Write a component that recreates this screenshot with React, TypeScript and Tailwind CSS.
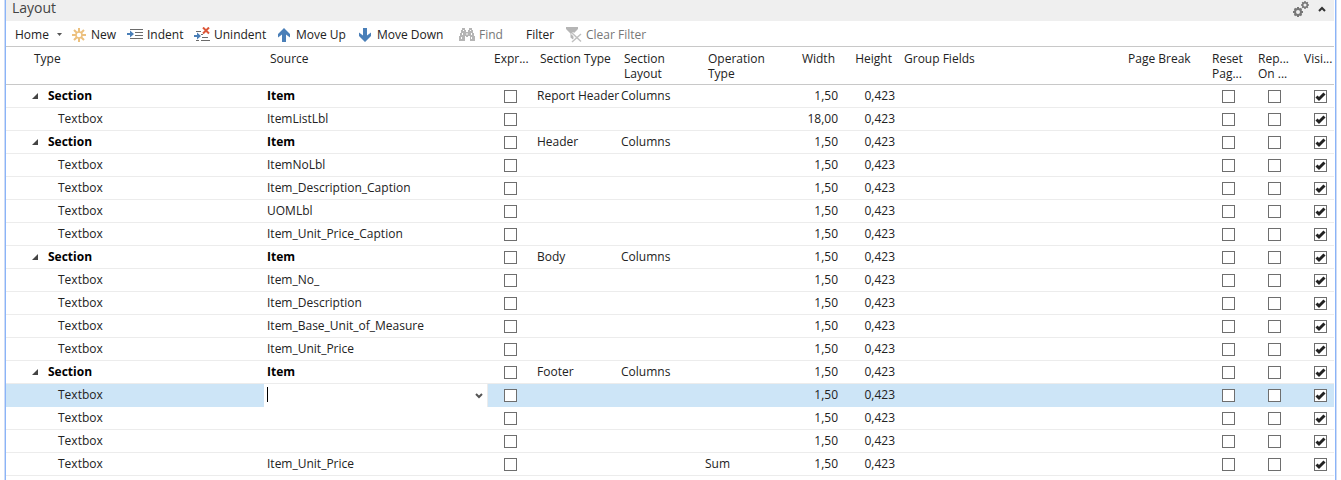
import type { ReactNode } from "react"

type Row = {
  type: "Section" | "Textbox";
  source: string;
  sectionType?: string;
  sectionLayout?: string;
  operation?: string;
  width?: string;
  selected?: boolean;
};

const rows: Row[] = [
  { type: "Section", source: "Item", sectionType: "Report Header", sectionLayout: "Columns" },
  { type: "Textbox", source: "ItemListLbl", width: "18,00" },
  { type: "Section", source: "Item", sectionType: "Header", sectionLayout: "Columns" },
  { type: "Textbox", source: "ItemNoLbl" },
  { type: "Textbox", source: "Item_Description_Caption" },
  { type: "Textbox", source: "UOMLbl" },
  { type: "Textbox", source: "Item_Unit_Price_Caption" },
  { type: "Section", source: "Item", sectionType: "Body", sectionLayout: "Columns" },
  { type: "Textbox", source: "Item_No_" },
  { type: "Textbox", source: "Item_Description" },
  { type: "Textbox", source: "Item_Base_Unit_of_Measure" },
  { type: "Textbox", source: "Item_Unit_Price" },
  { type: "Section", source: "Item", sectionType: "Footer", sectionLayout: "Columns" },
  { type: "Textbox", source: "", selected: true },
  { type: "Textbox", source: "" },
  { type: "Textbox", source: "" },
  { type: "Textbox", source: "Item_Unit_Price", operation: "Sum" }
];

const NewIcon = () => (
  <svg className="w-4 h-4 shrink-0" viewBox="0 0 16 16" fill="none" stroke="#ecc07e" strokeWidth="2">
    <circle cx="8" cy="8" r="3" strokeWidth="1.5" />
    <path d="M8 1v4M8 11v4M1 8h4M11 8h4M3 3l2.800 2.800M10.200 10.200L13 13M13 3l-2.800 2.800M5.800 10.200L3 13" />
  </svg>
)

const IndentIcon = () => (
  <svg className="w-4 h-4 shrink-0" viewBox="0 0 16 16">
    <path d="M3 2.500h13M8 5.500h8M8 8.500h8M3 11.500h13" stroke="#6b6b6b" fill="none" />
    <path d="M0 6h3V3.500l4 3.500-4 3.500V8H0z" fill="#4a7fb8" />
  </svg>
)

const UnindentIcon = () => (
  <svg className="w-4 h-4 shrink-0" viewBox="0 0 16 16">
    <path d="M2 4.500h5M7 7.500h2M8 10.500h6M2 13.500h3M7 13.500h9" stroke="#6b6b6b" fill="none" />
    <path d="M0 8h3V5.500L7 9l-4 3.500V10H0z" fill="#4a7fb8" />
    <path d="M9 0.500l6 6M15 0.500l-6 6" stroke="#dc5638" strokeWidth="2" fill="none" />
  </svg>
)

const ArrowIcon = ({ down }: { down?: boolean }) => (
  <svg className={`w-4 h-4 shrink-0 ${down ? "rotate-180" : ""}`} viewBox="0 0 16 16" fill="#4a7fb8">
    <path d="M8 1l6 6v3.500L10 7.500V15H6V7.500l-4 3V7z" />
  </svg>
)

const FindIcon = () => (
  <svg className="w-4 h-4 shrink-0" viewBox="0 0 16 16" fill="#b5b5b5">
    <path d="M3 1h3v2h1v2h2V3h1V1h3v2h1v3h1v3h1v5h-5V9H9v1H7V9H6v5H0V9h1V6h1V3h1z" />
    <path d="M4 3h1v1H4zM11 3h1v1h-1zM3 6h1v2H3zM12 6h1v2h-1zM2 10h1v2H2zM12 10h1v2h-1zM7.500 6h1v2h-1z" fill="#fff" />
  </svg>
)

const ClearFilterIcon = () => (
  <svg className="w-4 h-4 shrink-0" viewBox="0 0 16 16">
    <path d="M0 0h12v2L7.500 6.500V13L4.500 10.500v-4L0 2z" fill="#b5b5b5" />
    <path d="M6 6l9 8.500M15 7l-9 8" stroke="#fff" strokeWidth="3" />
    <path d="M6 6l9 8.500M15 7l-9 8" stroke="#c0c0c0" strokeWidth="1.500" />
  </svg>
)

const GearsIcon = () => (
  <svg className="w-[18px] h-[18px]" viewBox="0 0 18 18" fill="none" stroke="#777">
    <circle cx="6" cy="12" r="3" strokeWidth="2" />
    <path d="M6 7v2M6 15v2M1 12h2M9 12h2M2.500 8.500l1.500 1.500M8 14l1.500 1.500M9.500 8.500L8 10M4 14l-1.500 1.500" strokeWidth="2" />
    <circle cx="13" cy="5" r="2.300" strokeWidth="1.500" />
    <path d="M13 1v2M13 7v2M9 5h2M15 5h2M10.200 2.200l1.200 1.200M14.600 6.600l1.200 1.200M15.800 2.200l-1.200 1.200M11.400 6.600l-1.200 1.200" strokeWidth="1.500" />
  </svg>
)

const ToolButton = ({ icon, label, className = "", disabled }: { icon?: ReactNode; label: string; className?: string; disabled?: boolean }) => (
  <button disabled={disabled} className={`flex items-center gap-1 shrink-0 whitespace-nowrap disabled:text-[#777] ${className}`}>
    {icon}
    {label}
  </button>
)

const Check = ({ label, checked }: { label: string; checked?: boolean }) => (
  <span className="grid w-[13px] h-[13px]">
    <input
      type="checkbox"
      aria-label={label}
      defaultChecked={checked}
      className="peer col-start-1 row-start-1 appearance-none w-[13px] h-[13px] bg-white border border-[#6e6e6e]"
    />
    <svg className="col-start-1 row-start-1 hidden peer-checked:block pointer-events-none w-[13px] h-[13px]" viewBox="0 0 13 13" fill="none">
      <path d="M2.500 6.500L5 9L10.500 3.500" stroke="#222" strokeWidth="3" />
    </svg>
  </span>
)

const columns = [
  { label: "Type", width: "w-[258px]", head: "pl-7" },
  { label: "Source", width: "w-[224px]", head: "pl-1.5" },
  { label: "Expr...", width: "w-[46px]", head: "pl-1.5" },
  { label: "Section Type", width: "w-[84px]", head: "pl-1.5" },
  { label: "Section Layout", width: "w-[84px]", head: "pl-1.5 whitespace-normal pr-4" },
  { label: "Operation Type", width: "w-[84px]", head: "pl-1.5 whitespace-normal pr-4" },
  { label: "Width", width: "w-[55px]", head: "pr-1.5 text-right" },
  { label: "Height", width: "w-[57px]", head: "pr-1.5 text-right" },
  { label: "Group Fields", width: "", head: "pl-1.5" },
  { label: "Page Break", width: "w-[84px]", head: "pl-1.5" },
  { label: "Reset Pag...", width: "w-[46px]", head: "pl-1.5 whitespace-normal" },
  { label: "Rep... On ...", width: "w-[46px]", head: "pl-1.5 whitespace-normal" },
  { label: "Visi...", width: "w-[36px]", head: "pl-1.5" }
];

const SourceEditor = () => (
  <div className="relative flex items-center h-[23px] bg-white border-r border-[#ececec] pl-[3px] pr-1">
    <span className="absolute left-[3px] top-[3px] w-px h-[15px] bg-black" />
    <input type="text" aria-label="Source" className="min-w-0 flex-1 h-full outline-none" />
    <button aria-label="Open source list">
      <svg className="w-2 h-2" viewBox="0 0 8 8" fill="none" stroke="#555" strokeWidth="2">
        <path d="M1 2l3 3 3-3" />
      </svg>
    </button>
  </div>
)

const LayoutRow = ({ row }: { row: Row }) => {
  const section = row.type === "Section";
  const cell = `h-[23px] p-0 align-top border-b ${row.selected ? "border-[#cde5f7]" : "border-[#ececec]"}`;
  return (
    <tr className={`leading-[22px] ${row.selected ? "bg-[#cde5f7]" : ""}`}>
      <td className={cell}>
        {section ? (
          <div className="flex items-center pl-[26px] gap-[10px] font-bold text-black">
            <button aria-label="Collapse section">
              <svg className="w-1.5 h-1.5" viewBox="0 0 6 6" fill="#444">
                <path d="M6 0v6H0z" />
              </svg>
            </button>
            Section
          </div>
        ) : (
          <div className="pl-[52px]">Textbox</div>
        )}
      </td>
      {row.selected ? (
        <td className="h-[23px] p-0"><SourceEditor /></td>
      ) : (
        <td className={`${cell} ${section ? "font-bold text-black" : ""}`}>
          <div className="pl-[3px]">{row.source}</div>
        </td>
      )}
      <td className={cell}><div className="pl-4 pt-[5px]"><Check label="Expression" /></div></td>
      <td className={cell}><div className="pl-[3px]">{row.sectionType}</div></td>
      <td className={cell}><div className="pl-[3px]">{row.sectionLayout}</div></td>
      <td className={cell}><div className="pl-[3px]">{row.operation}</div></td>
      <td className={cell}><div className="pr-[3px] text-right">{row.width ?? "1,50"}</div></td>
      <td className={cell}><div className="pr-[3px] text-right">0,423</div></td>
      <td className={cell}></td>
      <td className={cell}></td>
      <td className={cell}><div className="pl-4 pt-[5px]"><Check label="Reset page number" /></div></td>
      <td className={cell}><div className="pl-4 pt-[5px]"><Check label="Repeat on every page" /></div></td>
      <td className={cell}><div className="pl-4 pt-[5px]"><Check label="Visible" checked /></div></td>
    </tr>
  )
}

const App = () => {
  return (
    <div className="min-h-screen flex bg-white px-1 font-['Open_Sans','Noto_Sans',sans-serif] text-[12px] text-[#222]">
      <div className="flex flex-1 min-w-0 border-x border-[#cfdcf5]">
        <main className="flex-1 min-w-0 border-x border-[#8ab4f8] pr-px">
          <header className="flex items-start justify-between h-[21px] bg-[#efefef] pl-1.5 pr-2">
            <h1 className="text-[14px] leading-4 text-[#444]">Layout</h1>
            <div className="flex items-center gap-2">
              <button aria-label="Customize"><GearsIcon /></button>
              <button aria-label="Collapse">
                <svg className="w-2 h-2" viewBox="0 0 8 8" fill="none" stroke="#333" strokeWidth="2">
                  <path d="M1 6l3-3 3 3" />
                </svg>
              </button>
            </div>
          </header>

          <div className="flex items-stretch h-[26px] pl-[9px] pt-0.5 border-b border-[#c8c8c8]">
            <button className="flex items-center gap-2 w-[56px]">
              Home
              <svg className="w-[5px] h-[3px]" viewBox="0 0 5 3" fill="#555"><path d="M0 0h5L2.500 3z" /></svg>
            </button>
            <ToolButton icon={<NewIcon />} label="New" className="w-[56px]" />
            <ToolButton icon={<IndentIcon />} label="Indent" className="w-[67px]" />
            <ToolButton icon={<UnindentIcon />} label="Unindent" className="w-[82px]" />
            <ToolButton icon={<ArrowIcon />} label="Move Up" className="w-[81px]" />
            <ToolButton icon={<ArrowIcon down />} label="Move Down" className="w-[102px]" />
            <ToolButton icon={<FindIcon />} label="Find" disabled className="w-[67px]" />
            <ToolButton label="Filter" className="w-[40px]" />
            <ToolButton icon={<ClearFilterIcon />} label="Clear Filter" disabled />
          </div>

          <div className="overflow-hidden">
            <table className="w-full table-fixed border-separate border-spacing-0 whitespace-nowrap">
              <thead>
                <tr>
                  {columns.map((column) => (
                    <th
                      key={column.label}
                      className={`h-[38px] pt-1 pb-[3px] align-top text-left font-normal leading-[15px] border-b border-[#c8c8c8] ${column.width} ${column.head}`}
                    >
                      {column.label}
                    </th>
                  ))}
                </tr>
              </thead>
              <tbody>
                {rows.map((row, index) => (
                  <LayoutRow key={index} row={row} />
                ))}
              </tbody>
            </table>
          </div>
        </main>
      </div>
    </div>
  )
}

export default App
